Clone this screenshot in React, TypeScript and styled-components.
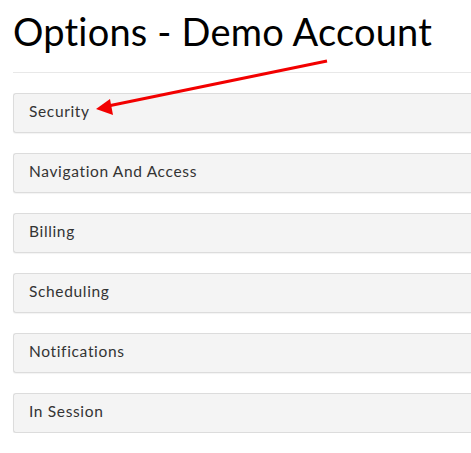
import React from "react";
import styled, { createGlobalStyle } from "styled-components";

const Global = createGlobalStyle`
  html, body { margin: 0; padding: 0; background: #fff; overflow: hidden; }
  body { font-family: Lato, "Open Sans", sans-serif; }
`;

const Page = styled.div`
  position: relative;
  box-sizing: border-box;
  width: 471px;
  padding: 8px 0 0 13px;
`;

const Title = styled.h1`
  margin: 0;
  font-family: Lato, sans-serif;
  font-weight: 400;
  font-size: 38px;
  line-height: 46px;
  color: #000;
  letter-spacing: 0.2px;
`;

const Divider = styled.hr`
  margin: 18px 0 20px 0;
  border: 0;
  border-top: 1px solid #e8e8e8;
`;

const List = styled.div`
  display: flex;
  flex-direction: column;
  gap: 20px;
`;

const Panel = styled.div`
  box-sizing: border-box;
  height: 40px;
  display: flex;
  align-items: center;
  padding: 0 0 4px 15px;
  background: #f4f4f4;
  border: 1px solid #dcdcdc;
  border-right: none;
  border-radius: 3px 0 0 3px;
  box-shadow: 0 1px 1px rgba(0, 0, 0, 0.05);
  font-size: 15.5px;
  letter-spacing: 0.65px;
  color: #333;
`;

const Arrow = styled.svg`
  position: absolute;
  left: 0;
  top: 0;
  pointer-events: none;
`;

const items = [
  "Security",
  "Navigation And Access",
  "Billing",
  "Scheduling",
  "Notifications",
  "In Session",
];

export default function App() {
  return (
    <>
      <Global />
      <Page>
        <Title>Options - Demo Account</Title>
        <Divider />
        <List>
          {items.map((t) => (
            <Panel key={t}>{t}</Panel>
          ))}
        </List>
        <Arrow width="471" height="453" viewBox="0 0 471 453">
          <line x1="327" y1="61" x2="108" y2="106" stroke="#f20000" strokeWidth="3" />
          <polygon points="96,109 110,99 113,115" fill="#f20000" />
        </Arrow>
      </Page>
    </>
  );
}
